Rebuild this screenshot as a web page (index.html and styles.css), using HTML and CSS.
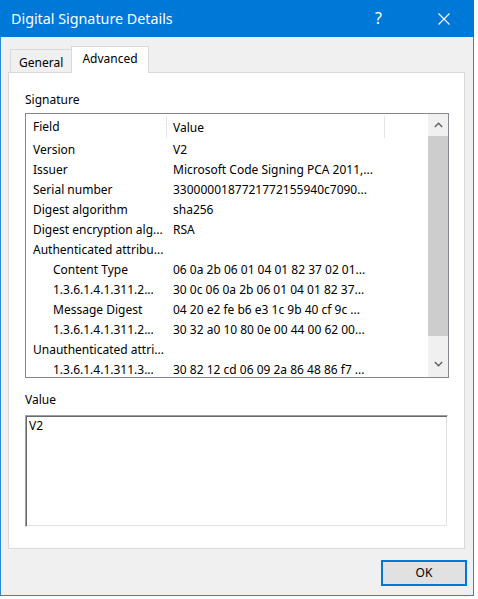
FILE: index.html
```html
<!DOCTYPE html>
<html>
<head>
<meta charset="utf-8">
<link rel="stylesheet" href="styles.css">
</head>
<body>
<div class="window">
  <div class="titlebar">
    <span class="title">Digital Signature Details</span>
    <span class="help">?</span>
    <span class="close">
      <svg width="12" height="12" viewBox="0 0 12 12"><path d="M0.5 0.5 L11.5 11.5 M11.5 0.5 L0.5 11.5" stroke="#fff" stroke-width="1.1" fill="none"/></svg>
    </span>
  </div>
  <div class="client">
    <div class="tabs">
      <div class="tab">General</div>
      <div class="tab active">Advanced</div>
    </div>
    <div class="panel">
      <div class="label">Signature</div>
      <div class="listbox">
        <div class="list">
          <div class="row head"><span class="c1">Field</span><span class="c2">Value</span><span class="c3"></span></div>
          <div class="row"><span class="c1">Version</span><span class="c2">V2</span></div>
          <div class="row"><span class="c1">Issuer</span><span class="c2">Microsoft Code Signing PCA 2011,...</span></div>
          <div class="row"><span class="c1">Serial number</span><span class="c2">3300000187721772155940c7090...</span></div>
          <div class="row"><span class="c1">Digest algorithm</span><span class="c2">sha256</span></div>
          <div class="row"><span class="c1">Digest encryption alg...</span><span class="c2">RSA</span></div>
          <div class="row"><span class="c1">Authenticated attribu...</span><span class="c2"></span></div>
          <div class="row"><span class="c1 sub">Content Type</span><span class="c2">06 0a 2b 06 01 04 01 82 37 02 01...</span></div>
          <div class="row"><span class="c1 sub">1.3.6.1.4.1.311.2...</span><span class="c2">30 0c 06 0a 2b 06 01 04 01 82 37...</span></div>
          <div class="row"><span class="c1 sub">Message Digest</span><span class="c2">04 20 e2 fe b6 e3 1c 9b 40 cf 9c ...</span></div>
          <div class="row"><span class="c1 sub">1.3.6.1.4.1.311.2...</span><span class="c2">30 32 a0 10 80 0e 00 44 00 62 00...</span></div>
          <div class="row"><span class="c1">Unauthenticated attri...</span><span class="c2"></span></div>
          <div class="row"><span class="c1 sub">1.3.6.1.4.1.311.3...</span><span class="c2">30 82 12 cd 06 09 2a 86 48 86 f7 ...</span></div>
        </div>
        <div class="scrollbar">
          <div class="sbtn up"><svg width="9" height="6" viewBox="0 0 9 6"><path d="M0.8 5 L4.5 1.3 L8.2 5" stroke="#606060" stroke-width="1.4" fill="none"/></svg></div>
          <div class="thumb"></div>
          <div class="track"></div>
          <div class="sbtn down"><svg width="9" height="6" viewBox="0 0 9 6"><path d="M0.8 1 L4.5 4.7 L8.2 1" stroke="#606060" stroke-width="1.4" fill="none"/></svg></div>
        </div>
      </div>
      <div class="label value-label">Value</div>
      <div class="textbox">V2</div>
    </div>
    <div class="buttons">
      <div class="btn">OK</div>
    </div>
  </div>
</div>
</body>
</html>
```
FILE: styles.css
```css
html, body {
  margin: 0;
  padding: 0;
  background: #ffffff;
}
body {
  font-family: "Noto Sans", "Open Sans", sans-serif;
  font-size: 12px;
  color: #000;
}
.window {
  width: 474px;
  height: 596px;
  display: flex;
  flex-direction: column;
}
.titlebar {
  height: 37px;
  background: #0078d7;
  color: #fff;
  display: flex;
  align-items: center;
  flex-shrink: 0;
}
.title {
  font-size: 14.3px;
  margin-left: 11px;
  flex: 1;
  padding-bottom: 1px;
}
.help {
  font-size: 16px;
  width: 10px;
  margin-right: 53px;
  padding-bottom: 2px;
}
.close {
  display: flex;
  margin-right: 24px;
}
.client {
  flex: 1;
  background: #f0f0f0;
  border: 1px solid #2b86d6;
  border-top: none;
  padding: 9px 8px 0 7px;
  display: flex;
  flex-direction: column;
}
.tabs {
  display: flex;
  align-items: flex-end;
  height: 26px;
  padding-left: 2px;
  position: relative;
  z-index: 1;
}
.tab {
  height: 23px;
  box-sizing: border-box;
  border: 1px solid #d9d9d9;
  border-bottom: none;
  background: #f0f0f0;
  padding: 0 8px;
  display: flex;
  align-items: center;
  padding-top: 2px;
}
.tab:first-child {
  width: 61px;
  border-right: none;
}
.tab.active {
  height: 27px;
  margin-bottom: -1px;
  background: #fff;
  width: 78px;
  justify-content: center;
  padding: 0 0 4px 0;
}
.panel {
  background: #fff;
  border: 1px solid #d9d9d9;
  height: 477px;
  box-sizing: border-box;
  padding: 19px 0 0 16px;
}
.label {
  line-height: 16px;
  height: 16px;
  margin-bottom: 5px;
}
.listbox {
  width: 424px;
  height: 265px;
  box-sizing: border-box;
  border: 1px solid #828790;
  display: flex;
  overflow: hidden;
}
.list {
  flex: 1;
  overflow: hidden;
}
.row {
  display: flex;
  height: 20px;
  align-items: center;
  white-space: nowrap;
}
.row.head {
  height: 25px;
}
.c1 {
  width: 140px;
  box-sizing: border-box;
  padding-left: 7px;
  flex-shrink: 0;
}
.c1.sub {
  padding-left: 27px;
}
.c2 {
  padding-left: 7px;
}
.head .c1, .head .c2 {
  align-self: stretch;
  display: flex;
  align-items: center;
}
.head .c2 {
  width: 219px;
  box-sizing: border-box;
  border-left: 1px solid #e5e5e5;
  border-right: 1px solid #e5e5e5;
  padding-left: 6px;
  margin: 2px 0 1px 0;
}
.scrollbar {
  width: 20px;
  background: #f0f0f0;
  display: flex;
  flex-direction: column;
  flex-shrink: 0;
}
.sbtn {
  display: flex;
  align-items: center;
  justify-content: center;
  flex-shrink: 0;
}
.sbtn.up {
  height: 22px;
}
.sbtn.down {
  height: 24px;
  padding-bottom: 2px;
  box-sizing: border-box;
}
.thumb {
  height: 200px;
  background: #cdcdcd;
  flex-shrink: 0;
}
.track {
  flex: 1;
}
.value-label {
  margin-top: 14px;
  margin-bottom: 7px;
}
.textbox {
  width: 423px;
  height: 112px;
  box-sizing: border-box;
  border: 1px solid;
  border-color: #a0a0a0 #ffffff #ffffff #a0a0a0;
  box-shadow: inset 1px 1px 0 #696969, inset -1px -1px 0 #e3e3e3;
  padding: 1px 0 0 3px;
  line-height: 18px;
}
.buttons {
  display: flex;
  justify-content: flex-end;
  padding-top: 11px;
  margin-right: -2px;
}
.btn {
  width: 86px;
  height: 26px;
  box-sizing: border-box;
  border: 2px solid #0078d7;
  background: #e1e1e1;
  display: flex;
  align-items: center;
  justify-content: center;
  padding-bottom: 1px;
}
```
